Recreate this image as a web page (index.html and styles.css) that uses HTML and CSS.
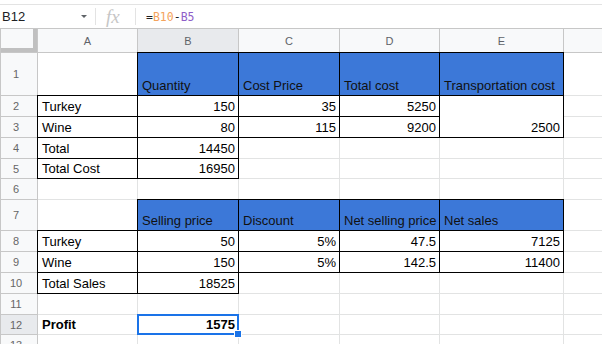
FILE: index.html
```html
<!DOCTYPE html>
<html lang="en">
<head>
    <meta charset="UTF-8">
    <title>Cost sheet</title>
    <link rel="stylesheet" href="styles.css">
</head>
<body>
    <div class="formula-bar">
        <div class="name-box">
            <span>B12</span>
            <span class="caret"></span>
        </div>
        <span class="sep"></span>
        <span class="fx">fx</span>
        <span class="sep"></span>
        <div class="formula">=<span class="ref1">B10</span>-<span class="ref2">B5</span></div>
    </div>

    <table class="grid">
        <colgroup>
            <col class="c-rh">
            <col class="c-a">
            <col class="c-b">
            <col class="c-c">
            <col class="c-d">
            <col class="c-e">
            <col class="c-f">
        </colgroup>
        <tr class="r-head">
            <th class="corner"></th>
            <th>A</th>
            <th class="active">B</th>
            <th>C</th>
            <th>D</th>
            <th>E</th>
            <th></th>
        </tr>
        <tr class="r-tall">
            <th class="rh">1</th>
            <td></td>
            <td class="b hd">Quantity</td>
            <td class="b hd">Cost Price</td>
            <td class="b hd">Total cost</td>
            <td class="b hd">Transportation cost</td>
            <td></td>
        </tr>
        <tr>
            <th class="rh">2</th>
            <td class="b">Turkey</td>
            <td class="b n">150</td>
            <td class="b n">35</td>
            <td class="b n">5250</td>
            <td class="b n" rowspan="2">2500</td>
            <td></td>
        </tr>
        <tr>
            <th class="rh">3</th>
            <td class="b">Wine</td>
            <td class="b n">80</td>
            <td class="b n">115</td>
            <td class="b n">9200</td>
            <td></td>
        </tr>
        <tr>
            <th class="rh">4</th>
            <td class="b">Total</td>
            <td class="b n">14450</td>
            <td></td>
            <td></td>
            <td></td>
            <td></td>
        </tr>
        <tr class="r-short">
            <th class="rh">5</th>
            <td class="b">Total Cost</td>
            <td class="b n">16950</td>
            <td></td>
            <td></td>
            <td></td>
            <td></td>
        </tr>
        <tr>
            <th class="rh">6</th>
            <td></td>
            <td></td>
            <td></td>
            <td></td>
            <td></td>
            <td></td>
        </tr>
        <tr class="r-mid">
            <th class="rh">7</th>
            <td></td>
            <td class="b hd">Selling price</td>
            <td class="b hd">Discount</td>
            <td class="b hd">Net selling price</td>
            <td class="b hd">Net sales</td>
            <td></td>
        </tr>
        <tr>
            <th class="rh">8</th>
            <td class="b">Turkey</td>
            <td class="b n">50</td>
            <td class="b n">5%</td>
            <td class="b n">47.5</td>
            <td class="b n">7125</td>
            <td></td>
        </tr>
        <tr>
            <th class="rh">9</th>
            <td class="b">Wine</td>
            <td class="b n">150</td>
            <td class="b n">5%</td>
            <td class="b n">142.5</td>
            <td class="b n">11400</td>
            <td></td>
        </tr>
        <tr>
            <th class="rh">10</th>
            <td class="b">Total Sales</td>
            <td class="b n">18525</td>
            <td></td>
            <td></td>
            <td></td>
            <td></td>
        </tr>
        <tr>
            <th class="rh">11</th>
            <td></td>
            <td></td>
            <td></td>
            <td></td>
            <td></td>
            <td></td>
        </tr>
        <tr class="r-short">
            <th class="rh active">12</th>
            <td class="bold">Profit</td>
            <td class="n bold sel">1575</td>
            <td></td>
            <td></td>
            <td></td>
            <td></td>
        </tr>
        <tr>
            <th class="rh">13</th>
            <td></td>
            <td></td>
            <td></td>
            <td></td>
            <td></td>
            <td></td>
        </tr>
    </table>
</body>
</html>
```

FILE: styles.css
```css
body {
    margin: 0;
    width: 602px;
    height: 344px;
    overflow: hidden;
    background-color: #fff;
    font-family: 'Liberation Sans', Arial, sans-serif;
    color: #000;
}

/* formula bar */
.formula-bar {
    margin-top: 4px;
    height: 23px;
    border-top: 1px solid #e3e3e3;
    display: flex;
    align-items: center;
}
.name-box {
    width: 93px;
    padding-left: 2px;
    display: flex;
    align-items: center;
    justify-content: space-between;
    font-size: 13px;
    color: #202124;
}
.caret {
    width: 0;
    height: 0;
    margin-right: 8px;
    border-left: 3px solid transparent;
    border-right: 3px solid transparent;
    border-top: 3px solid #5f6368;
}
.sep {
    width: 1px;
    height: 17px;
    background-color: #e3e3e3;
}
.fx {
    width: 16px;
    margin: 0 13px 0 10px;
    font-family: 'Liberation Serif', serif;
    font-style: italic;
    font-size: 19px;
    line-height: 20px;
    color: #c6c6c6;
}
.formula {
    margin-left: 10px;
    font-family: 'DejaVu Sans Mono', monospace;
    font-size: 11.5px;
    color: #202124;
}
.ref1 {
    color: #f4a35c;
}
.ref2 {
    color: #8e5ec8;
}

/* grid */
.grid {
    width: 602px;
    border-collapse: collapse;
    table-layout: fixed;
}
.c-rh { width: 37px; }
.c-a { width: 100px; }
.c-b { width: 101px; }
.c-c { width: 101px; }
.c-d { width: 100px; }
.c-e { width: 124px; }
.c-f { width: 39px; }

tr {
    height: 21px;
}
.r-head {
    height: 24px;
}
.r-tall {
    height: 43px;
}
.r-mid {
    height: 31px;
}
.r-short {
    height: 20px;
}

th {
    border: 1px solid #c7c7c7;
    background-color: #f8f9fa;
    color: #5f6368;
    font-size: 11px;
    font-weight: normal;
    text-align: center;
    vertical-align: middle;
    padding: 0;
}
th.active {
    background-color: #e8eaed;
}
.corner {
    box-shadow: inset -4px -4px 0 #c0c0c0;
}
.rh {
    padding-right: 6px;
    color: #666;
}

td {
    border: 1px solid #e2e3e3;
    padding: 0 3px 2px 4px;
    font-size: 13px;
    vertical-align: bottom;
    white-space: nowrap;
    overflow: hidden;
}
td.b {
    border: 1px double #000;
}
.hd {
    background-color: #3c78d8;
    color: #111;
}
.n {
    text-align: right;
}
.bold {
    font-weight: bold;
}

/* selected cell */
.sel {
    position: relative;
    overflow: visible;
}
.sel::after {
    content: "";
    position: absolute;
    top: -1px;
    left: -1px;
    right: -1px;
    bottom: -1px;
    border: 2px solid #1a73e8;
}
.sel::before {
    content: "";
    position: absolute;
    right: -4px;
    bottom: -4px;
    width: 6px;
    height: 6px;
    background-color: #1a73e8;
    border: 1px solid #fff;
    z-index: 1;
}
```
